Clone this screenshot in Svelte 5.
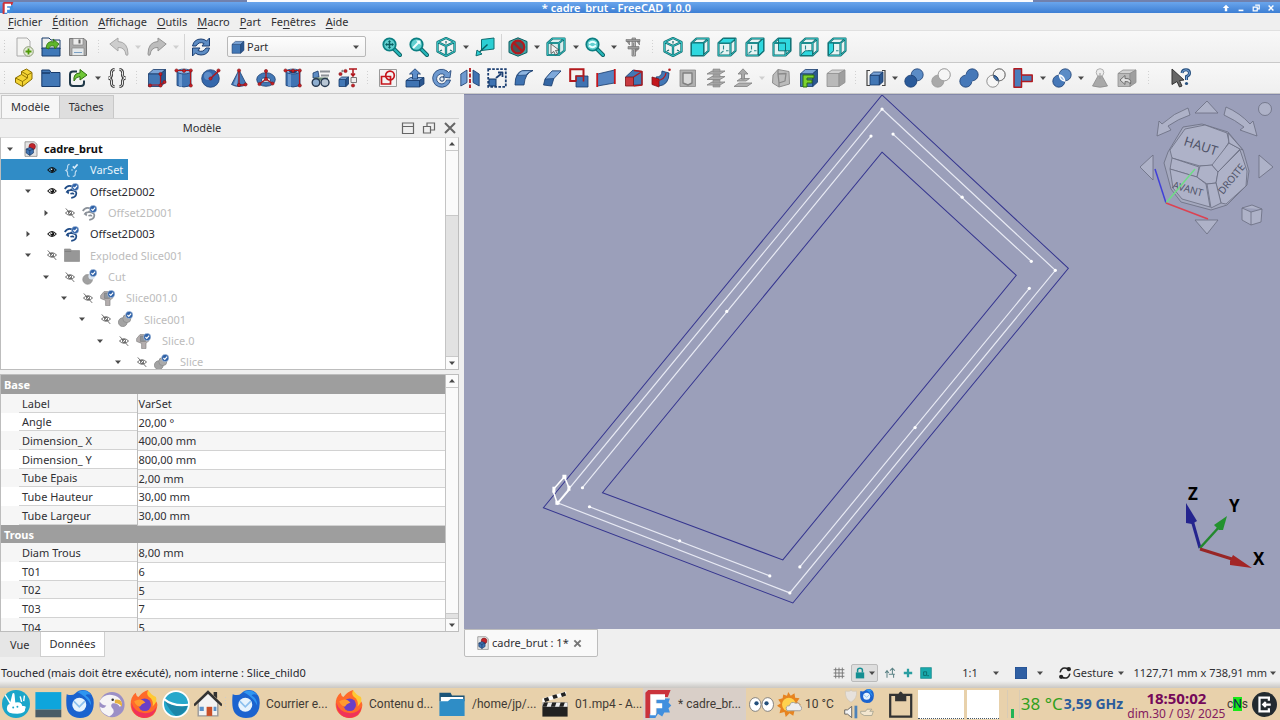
<script>
  const two = (d, fill = 'none', w = 1) =>
    `<path d="${d}" fill="${fill}" stroke="#0f6c6f" stroke-width="${w + 1.3}" stroke-linejoin="round"/><path d="${d}" fill="none" stroke="#35bfc0" stroke-width="${w}" stroke-linejoin="round"/>`;
  const st = (d, fill, stroke, w = 1) =>
    `<path d="${d}" fill="${fill}" stroke="${stroke}" stroke-width="${w}" stroke-linejoin="round"/>`;
  const c = (x, y, r, fill, stroke = 'none', w = 1) =>
    `<circle cx="${x}" cy="${y}" r="${r}" fill="${fill}" stroke="${stroke}" stroke-width="${w}"/>`;
  const dots = (list) => list.map(([x, y]) => c(x, y, 1.6, '#c81e24', '#7c1216', 0.6)).join('');

  const isoWire = two('M10 1 18.500 5V14.500L10 19 1.500 14.500V5ZM1.500 5 10 9 18.500 5M10 9V19') + st('M10 4V6.500M6 13 4 14M14 13 16 14', 'none', '#0f6c6f', 1.2);
  const view = (face, inner = true) =>
    two('M1.5 6H13.5V18.5H1.5ZM1.5 6 6.5 1.500H18.5V13.8L13.5 18.5M13.5 6 18.500 1.5', '#e6f3f3', 0.8) +
    (inner ? st('M6.500 8.500V12.500M6.500 13.800 3.500 16.500M9 13.800H11.500', 'none', '#27898c', 1.1) : '') +
    st(face, '#2fd8df', '#0f6c6f', 0.9);
  const lens = (inner) =>
    `<path d="M12 12 18 18" stroke="#0b5f62" stroke-width="4" stroke-linecap="round"/><path d="M12 12 18 18" stroke="#25b5b8" stroke-width="2.400" stroke-linecap="round"/>` +
    c(7.5, 7.5, 6.2, '#62d0d0', '#0b7f82', 1.8) + inner;
  const blueBox = (x, y, s) =>
    st(`M${x} ${y + s * 0.25}H${x + s * 0.72}V${y + s}H${x}Z`, '#4277b5', '#173a6b', 0.8) +
    st(`M${x} ${y + s * 0.25} ${x + s * 0.28} ${y}H${x + s}L${x + s * 0.72} ${y + s * 0.25}Z`, '#7aa3d6', '#173a6b', 0.8) +
    st(`M${x + s * 0.72} ${y + s * 0.25} ${x + s} ${y}V${y + s * 0.75}L${x + s * 0.72} ${y + s}Z`, '#2b5790', '#173a6b', 0.8);
  const grayBox =
    st('M1 5.5H13V18.500H1Z', '#b9b9b9', '#8f8f8f', 0.8) + st('M1 5.5 6 2H19L13 5.5Z', '#d2d2d2', '#8f8f8f', 0.8) + st('M13 5.5 19 2V14.500L13 18.500Z', '#9f9f9f', '#8f8f8f', 0.8);
  const balls = (a, b, sa = '#1c3f72', sb = '#1c3f72') => c(13.2, 6.8, 6, b, sb, 0.8) + c(6.8, 13.2, 6, a, sa, 0.8);
  const cyl = st('M3 3.500V17.500Q10 20.500 17 17.500V3.500Z', '#3f74b4', '#1c3f72', 0.8) + st('M5 5V18Q7 19 8 19V6Z', '#6c9ad0', 'none', 0) + `<ellipse cx="10" cy="3.500" rx="7" ry="2.400" fill="#8db0dc" stroke="#1c3f72" stroke-width=".8"/>`;
  const cylMarks = '<path d="M2.500 2.500H16.500V17.500" fill="none" stroke="#b0161c" stroke-width="1.200"/>' + dots([[2.5, 2.5], [10, 2.8], [16.8, 2.5], [16.8, 17.5]]);
  const check = c(14, 5, 4.6, '#2f62a8', '#fff', 0.5) + '<path d="M11.8 5 13.5 6.8 16.4 3.4" fill="none" stroke="#fff" stroke-width="1.5"/>';
  const swirl = (s) => `<path d="M1 7.500Q4 2.500 9 4Q12 5 12 8Q9 7 8 9.500M3 12Q5 8 10 9Q17 10 15 15Q14 18 9 18.500M5 9.500Q4 12 6 13M8 13.500Q12 12 12 14.500" fill="none" stroke="${s}" stroke-width="2.200"/>`;

  const icons = {
    new: st('M3 1H13L16 4V19H3Z', '#f4f4f2', '#aaa') + c(14.5, 14.5, 4.8, '#e4ebd8', '#8b9a75') + '<path d="M14.5 11.5V17.5M11.5 14.5H17.5" stroke="#4e9a06" stroke-width="1.8"/>',
    open: st('M1 1H8L10 3H19V12H1Z', '#eee', '#173a6b') + st('M1 11H19V19H1Z', '#3f78b8', '#173a6b') + st('M5 11Q6 3 13 5L12 2 18 7 14 12 13 9Q8 8 8 12Z', '#5fb62c', '#2f6f10', 0.8),
    save: st('M1.5 1.5H16L18.5 4V18.5H1.5Z', '#a9a9a9', '#777') + st('M5 1.5H15V8H5Z', '#ececec', '#888', 0.7) + '<path d="M11.5 2.5V6.5" stroke="#666" stroke-width="2"/>' + st('M4 11H16V18.5H4Z', '#e4e8ea', '#888', 0.7) + '<path d="M6 15.5H14" stroke="#7aa0c4"/>',
    undo: st('M.8 7 9 1V4.5Q19 5 19 17Q19 19 17 18Q16 10 9 10.5V14Z', '#cdcdcd', '#a8a8a8'),
    redo: st('M19.200 7 11 1V4.5Q1 5 1 17Q1 19 3 18Q4 10 11 10.5V14Z', '#bdbdbd', '#959595'),
    refresh: st('M1.5 9Q3 2 10 2Q13.500 2 15.500 4L18.500 1V9H11L13 6.500Q8 4 5 9Z', '#5d8cc4', '#1c3f72') + st('M18.500 11Q17 18 10 18Q6.500 18 4.500 16L1.500 19V11H9L7 13.500Q12 16 15 11Z', '#5d8cc4', '#1c3f72'),
    box: blueBox(1.5, 1.5, 17) + '<path d="M3 17H13.500L17.500 14M13.500 17V6" stroke="#b0161c" stroke-width="1.200" fill="none"/>' + dots([[3, 17.5], [13.5, 17.5], [17.5, 14], [13.5, 6]]),
    part: blueBox(1.5, 2, 17),
    fit: lens('<path d="M7.500 4V11M4 7.500H11" stroke="#0b5f62" stroke-width="1.400"/><path d="M6 5 7.500 3 9 5ZM6 10 7.500 12 9 10ZM5 6 3 7.500 5 9ZM10 6 12 7.500 10 9Z" fill="#0b5f62"/>'),
    fitsel: lens('<path d="M4 11 10 5" stroke="#f2ffff" stroke-width="2"/><path d="M7 3.500H11.500V8Z" fill="#f2ffff"/>'),
    lensbox: lens('<path d="M4 6.500Q7.500 3 11 6.500M4 8.500Q7.500 12 11 8.500" fill="none" stroke="#e6ffff" stroke-width="1.800"/>'),
    iso: isoWire,
    plane: st('M6.500 2.500 19 1V12L6.500 13.500Z', '#2bcfd4', '#0f6c6f') + '<path d="M12.500 7.500 4 15.500" stroke="#0b5f62" stroke-width="1.500"/>' + st('M1 18.800 2 13 7 17Z', '#2bcfd4', '#0f6c6f'),
    forbid: st('M10 .8 19 4.500V15.500L10 19.200 1 15.500V4.500Z', '#42a7a8', '#0b5f62') + c(10, 10, 6.3, '#4a565a', '#b3191d', 2.2) + '<path d="M5.600 5.600 14.400 14.400" stroke="#b3191d" stroke-width="2.200"/>',
    selbox: two('M1.500 6H13V18H1.500ZM1.500 6 6.500 1.500H18.500V13.500L13 18M13 6 18.500 1.500', '#d8eeee', 0.9) + st('M5 7 13 13 9.500 13.500 11.500 17 9.500 18 7.800 14.500 5 16.500Z', '#f2f2f2', '#333', 0.7),
    caliper: st('M9 1H12.500V19H9Z', '#b5b5b5', '#777', 0.8) + st('M3 2.500H17V4.500H3ZM4 4.500H6.500V8ZM5 9.500H16V12H5ZM14 4.500H16.500V8ZM12.500 12H15.500L12.500 15Z', '#9b9b9b', '#6f6f6f', 0.6) + st('M10.500 6V9M10.500 13V18', 'none', '#777', 0.7),
    vfront: view('M1.500 6H13.500V18.500H1.500Z', false),
    vtop: view('M1.500 6 6.500 1.500H18.500L13.500 6Z'),
    vright: view('M13.500 6 18.500 1.500V13.800L13.500 18.500Z'),
    vback: view('M6.500 6H13.500V13.800H6.500ZM6.500 1.500H18.500V13.800H13.500V6H6.500Z', false),
    vbottom: view('M1.500 18.500 6.500 13.800H13.500V18.500Z'),
    vleft: view('M1.500 6 6.500 6V13.800L1.500 18.500Z'),
    steps: st('M1.500 10 7.500 6.500V3.500L12.500 1 18 4.500V11L8.500 18.500 1.500 14.500Z', '#f3d434', '#8a6d00') + st('M1.500 10 8.500 13.500V18.500M8.500 13.500 13.500 10V7L18 4.500M7.500 3.500 13.500 7M7.500 6.500 13.500 10', 'none', '#8a6d00', 0.9),
    folder: st('M.8 2H8.500L10 4.500H19V18.500H.8Z', '#4277b5', '#173a6b') + '<path d="M1 5H9" stroke="#173a6b" stroke-width="1.500"/>',
    link: st('M9 3.500H5Q2 3.500 2 6.500V15Q2 18 5 18H13Q16 18 16 15V12.500', 'none', '#203848', 2) + st('M6 13Q5 5 12 5V1.500L19 7 12 12V8.500Q8 8.500 6 13Z', '#6fc736', '#2f6f10'),
    braces: '<path d="M7.500 1.500Q4 1.500 4.500 6Q5 9.500 1.500 10Q5 10.500 4.500 14Q4 18.500 7.500 18.500M12.500 1.500Q16 1.500 15.500 6Q15 9.500 18.500 10Q15 10.500 15.500 14Q16 18.500 12.500 18.500" fill="none" stroke="#333" stroke-width="2.800"/><path d="M7.500 1.500Q4 1.500 4.500 6Q5 9.500 1.500 10Q5 10.500 4.500 14Q4 18.500 7.500 18.500M12.500 1.500Q16 1.500 15.500 6Q15 9.500 18.500 10Q15 10.500 15.500 14Q16 18.500 12.500 18.500" fill="none" stroke="#eee" stroke-width="1"/>',
    cylinder: cyl + cylMarks,
    sphere: c(9.5, 10.5, 8.8, '#3568ac', '#1c3f72', 0.8) + c(7, 8, 4, '#5d8cc8') + '<path d="M9.500 10.500 17.500 3" stroke="#b0161c" stroke-width="1.500"/>' + dots([[9.5, 10.5], [17.5, 2.5]]),
    cone: st('M10 2 17.500 16.500Q10 20.500 2.500 16.500Z', '#4277b5', '#1c3f72', 0.8) + st('M9.500 4 4.500 16.500 8 17.500Z', '#7aa3d6', 'none', 0) + '<path d="M10 2V17H16" fill="none" stroke="#b0161c" stroke-width="1.300"/>' + dots([[10, 2.5], [10, 17], [16.5, 16.5]]),
    torus: '<ellipse cx="10" cy="11.500" rx="9.300" ry="6.800" fill="#4277b5" stroke="#1c3f72" stroke-width=".8"/><ellipse cx="10" cy="12" rx="4.500" ry="2.300" fill="#e9edf2" stroke="#1c3f72" stroke-width=".8"/><path d="M10 3V11L3.500 16M10 11 16.500 15.500" fill="none" stroke="#b0161c" stroke-width="1.300"/>' + dots([[10, 3], [10, 11], [3.5, 16], [16.5, 15.5]]),
    tube: cyl + '<ellipse cx="10" cy="3.800" rx="4" ry="1.200" fill="#1c3f72"/>' + cylMarks,
    prims: st('M2 5 7 3 8 9 2 10Z', '#5d8cc4', '#173a6b', 0.8) + '<path d="M9 3.500H19M10 7.500H18" stroke="#8b9096" stroke-width="1.800"/><path d="M3 11H17" stroke="#6b8a75" stroke-width="3"/>' + c(5, 14.5, 3.8, '#8eaed0', '#26384f', 1.4) + c(14, 14.5, 4, '#b8c6d4', '#26384f', 1.4),
    builder: blueBox(1, 9, 9.5) + st('M13 9.500H18.500V14.500H13Z', '#eee', '#777', 1) + '<path d="M11 1H19M15 1V8M13 5.500 15 8 17 5.500" stroke="#b0161c" stroke-width="1.500" fill="none"/>' + dots([[2.5, 6], [7.5, 3], [15, 17.5]]) + c(4.5, 3, 1.2, '#888'),
    sketch: st('M1.500 1.500H18.500V18.500H1.500Z', '#f4f4f4', '#9a9a9a') + '<path d="M3.500 8.500H12.500V16H3.500Z" fill="none" stroke="#c5161c" stroke-width="1.700"/><circle cx="12" cy="7.500" r="4.300" fill="none" stroke="#c5161c" stroke-width="1.700"/>',
    extrude: st('M1 12.500 5.500 9.500H19L14.500 12.500Z', '#7aa3d6', '#173a6b', 0.8) + st('M1 12.500H14.500V19H1Z', '#3f73b2', '#173a6b', 0.8) + st('M14.500 12.500 19 9.500V16L14.500 19Z', '#2b5790', '#173a6b', 0.8) + st('M7.500 11V6H4.500L10 .8 15.500 6H12.500V11Z', '#5d8ecb', '#173a6b', 0.8),
    revolve: st('M15 3A9 9 0 1 0 18.500 12L14.500 12A5 5 0 1 1 12.500 6.800L11 9 18 10 19 2.500 16.500 4.500Z', '#6f9ad0', '#1c3f72', 0.8) + c(10, 11, 2.2, '#e8f0f8', '#1c3f72'),
    mirror: st('M.8 6 7 2V14.500L.8 18Z', '#6f9ad0', '#173a6b', 0.8) + st('M13 2 19.200 6V18L13 14.500Z', '#3f73b2', '#173a6b', 0.8) + '<path d="M10 0V20" stroke="#b3191d" stroke-width="1.800" stroke-dasharray="4 1.500"/>',
    scale: '<path d="M1.200 1.200H18.800V18.800H1.200Z" fill="none" stroke="#1c3f72" stroke-width="1.800" stroke-dasharray="2.600 1.400"/>' + st('M2 11H9V18H2Z', '#3f73b2', '#173a6b') + st('M9 10 14 6M11 4.500H15.500V9', 'none', '#1c3f72', 1.8),
    fillet: st('M1 17Q1 3 10 2.500H19Q11 5 10 17Z', '#3f73b2', '#173a6b', 0.8) + st('M8 2.800 19 2.500Q14 4 12 7L3.500 7.500Q5 4 8 2.800Z', '#8db4e0', '#173a6b', 0.6),
    chamfer: st('M1.500 17 3 11 10 3H19L12 10 9.500 18Z', '#3466a4', '#173a6b', 0.8) + st('M3 11 10 3H19L12 10.500Z', '#7ea8da', '#173a6b', 0.6),
    face: '<path d="M1.200 1.200H14.500V13H1.200Z" fill="#f3f3f3" stroke="#b3191d" stroke-width="2"/>' + st('M7 8H19V19H7Z', '#3f73b2', '#173a6b', 0.8) + '<path d="M7 13.500V8H14.500V13.500" fill="none" stroke="#b3191d" stroke-width="1.600"/>',
    ruled: st('M1.500 6 18.500 2V15L1.500 18Z', '#5585c2', '#173a6b', 0.8) + '<path d="M1.200 5V19M18.800 1V16" stroke="#c5161c" stroke-width="1.800"/>',
    loft: st('M1.500 9 9 2 18 3.500V17H8Z', '#4277b5', '#173a6b', 0.8) + st('M1.500 9H9.500V18H1.500Z', '#c83a40', '#7c1216', 0.8) + st('M9.500 9 18 3.500V17L9.500 18M10 2.500 18 3.500', 'none', '#b3191d', 1.4),
    sweep: st('M5 9Q11 9 11 3L18 5Q18 17 8 18Z', '#4277b5', '#173a6b', 0.8) + st('M1 9 8 11 8 19 1 16.500Z', '#c5161c', '#7c1216', 0.8) + '<path d="M5 13Q14 12 15 5" fill="none" stroke="#b3191d" stroke-width="1.300"/>' + c(18.5, 1.8, 1.3, '#b3191d'),
    section: st('M2 2H17.500V18.500H2Z', '#b0b0b0', '#888', 0.8) + st('M5 5H14V15L10 17 5 15Z', '#dadada', '#808080', 1.4),
    cross: st('M1 6 6 3H19L14 6ZM1 11.500 6 8.500H19L14 11.500ZM1 17 6 14H19L14 17Z', '#b0b0b0', '#808080', 0.8) + st('M7 1H14V4H7ZM7 6.500H14V9H7ZM7 12H14V15H7ZM7 17H14V19H7Z', '#a2a2a2', '#888', 0.6),
    offset: st('M1 18.500 6 15H19L14 18.500ZM4 13 7.500 10.500H16.500L13 13Z', '#b0b0b0', '#808080', 0.8) + st('M8.500 11V6H5L10 .8 15 6H11.500V11Z', '#a9a9a9', '#808080', 0.8),
    thick: st('M2 7 7 1.500 18 3.500 18.500 16 8 19 1.500 15Z', '#bcbcbc', '#8f8f8f') + st('M7 6 15 5.500 14 13 8 15ZM7 1.500V6M8 15V19', 'none', '#8a8a8a', 1.3),
    proj: blueBox(1.5, 1.5, 17) + st('M4 19V7H15V10H8V12H13V15H8V19Z', '#7cd32f', '#2f6f10'),
    graycube: grayBox,
    compound: blueBox(4, 4, 13) + '<path d="M4 2.500H1V17.500H4M16 2.500H19V17.500H16" fill="none" stroke="#444" stroke-width="1.200"/>',
    boolean: balls('#2a5a9a', '#5b8cc6'),
    cut: balls('#a9a9a9', '#f6f6f6', '#999', '#999') + c(13.2, 6.8, 6, '#f6f6f6', '#999', 0.8),
    union: balls('#4678b8', '#4678b8') + c(10, 10, 4.5, '#4678b8'),
    common: balls('#f6f6f6', 'none', '#777', '#777') + st('M7.300 7Q12 8 12.800 13Q8 12.500 7.300 7Z', '#4277b5', '#1c3f72') + c(13.2, 6.8, 6, 'none', '#777', 0.8),
    join: st('M1 .8H8.500V7H19.200V13.500H8.500V19.200H1Z', '#4a7dbb', '#b3191d', 1.5) + st('M8.500 7V13.500', 'none', '#b3191d', 1),
    split: balls('#4678b8', '#5b8cc6') + st('M7.300 7Q12 8 12.800 13Q8 12.500 7.300 7Z', '#9dbde4', '#fff', 1.3),
    checkgeo: st('M8 8H12L17.500 18Q10 20.500 2.500 18Z', '#a9a9a9', '#8c8c8c', 0.8) + c(10, 4.5, 3.8, '#ececec', '#b0b0b0') + st('M10 5V11', 'none', '#999'),
    defeature: grayBox + st('M3 12 8 7.500V10.500Q15 10 13.500 16Q12 13 8 13.500V16.500Z', '#e0e0e0', '#6f6f6f'),
    whats: st('M1 1 13 12 8.500 12.500 11 18 8.500 19 6 13.500 1 16.500Z', '#666', '#333') + '<path d="M11 5Q11.500 1.800 15 1.800T18.500 5Q18.500 7.500 15.500 8.500V12" fill="none" stroke="#26507f" stroke-width="3"/><path d="M11 5Q11.500 1.800 15 1.800T18.500 5Q18.500 7.500 15.500 8.500V12" fill="none" stroke="#7aa3d6" stroke-width="1"/>' + c(15.5, 15.5, 1.6, '#26507f'),
    // tree
    eye: '<path d="M4 10Q10 3 16 10Q10 17 4 10Z" fill="none" stroke="currentColor" stroke-width="1.500"/><circle cx="10.500" cy="10" r="2.800" fill="currentColor"/><circle cx="9.500" cy="9" r="1" fill="#fff"/>',
    eyeoff: '<path d="M3.500 10Q10 3.500 16.500 10Q10 16.500 3.500 10ZM4 3.500 16 17" fill="none" stroke="#555" stroke-width="1.200"/><circle cx="10" cy="10" r="2.400" fill="none" stroke="#555" stroke-width="1.100"/>',
    doc: st('M2.500 1H14L17.500 4V19.200H2.500Z', '#e4e4e4', '#888') + c(11.5, 7, 4, '#c2242a', '#7c1216', 0.8) + st('M4 10 8.500 8 13 10V15L8.500 18 4 15Z', '#3f73b2', '#122f5a', 0.8) + '<path d="M4 10 8.500 12 13 10M8.500 12V18" fill="none" stroke="#122f5a" stroke-width=".8"/>',
    varset: '<path d="M7 3Q4 3 4.500 7Q4.500 9.500 2.500 10.500Q4.500 11.500 4.500 14Q4 18 7 18M11 18Q14.500 18 14 14Q14 11.500 16 10.500" fill="none" stroke="#b9d8ee" stroke-width="1.500"/><path d="M11 5.500 13 7.500 17 3" fill="none" stroke="#d9ecfa" stroke-width="2"/>' + c(10, 10, 0.9, '#d9ecfa'),
    off2d: swirl('#1f4b86') + check,
    off2dg: swirl('#8b9199') + check,
    gfolder: st('M.5 2.500H8L9.500 4.500H19.500V18H.5Z', '#979797', '#888', 0.8) + '<path d="M1 5.500H9" stroke="#777"/>',
    gcut: c(7, 13, 6, '#a0a0a0', '#909090') + c(12, 9, 4, '#d9e4f0') + check,
    gslice: st('M.8 7 5 2H16V10L12.500 12.500V19.500H7V13L.8 10.500Z', '#b4aeae', '#7f7f7f', 0.8) + st('M5.500 4H12V10.500H5.500Z', '#8f9499', '#777', 0.7) + check,
    gslice2: c(6, 14, 5.5, '#a3a3a3', '#8d8d8d') + c(11, 9.5, 5, '#aaa', '#8d8d8d') + check,
    // status bar
    grid: '<path d="M4.500 1V19M10 1V19M15.500 1V19M1 4.500H19M1 10H19M1 15.500H19" stroke="#777" stroke-width="1.600"/>',
    lock: '<path d="M3 9H17V19H3Z" fill="#158f92"/><path d="M6 9V5Q6 2 10 2T14 5V9" fill="none" stroke="#158f92" stroke-width="2.500"/>',
    relative: '<path d="M5 18V8M2 10 5 6 8 10M8 12H18M14 12V3M10 6 14 2 18 6M16 12V18" fill="none" stroke="#5b8285" stroke-width="1.700"/>',
    plus: '<path d="M10 3V17M3 10H17" stroke="#2a9ea1" stroke-width="3.800"/>',
    teal: st('M1 1H19V19H1Z', '#19a9ac', '#0d7f82') + st('M6 8H11V14H6ZM12 14.500H15', 'none', '#0b5f62', 1.3),
    bluesq: '<path d="M0 0H20V20H0Z" fill="#2f5fa3" stroke="#1d457f"/>',
    gesture: '<path d="M15 4Q5 0 3 9M5 16Q15 20 17 11" fill="none" stroke="#222" stroke-width="2.200"/>' + c(15.5, 4.5, 3, '#222') + c(4.5, 15.5, 3, '#222'),
    // task bar
    hare: c(10, 10, 10, '#1aa6ca') + '<path d="M3 5.500Q1.500 4 2.500 3L6 8.500 7.500 2.500Q9 1.500 9 3.500L9.500 9Q14 8 14.500 11.500Q18 11 16.500 13.500Q17 16.500 11 17Q3.500 17 3.500 13.500Q3.500 10.500 5.500 10Z" fill="#fff"/><path d="M14 8.500 13 4.500M15.500 8 16 4M9 13 13 12" stroke="#fff" fill="none"/>' + c(8, 12.5, 0.7, '#1aa6ca') + c(11, 12, 0.7, '#1aa6ca'),
    desk: '<path d="M1 1.500H19.500V14H1Z" fill="#0ea5dc"/><path d="M1 14H19.500V19.500H1Z" fill="#4a5c66"/>',
    bird: '<path d="M.5 3Q4.500 4.500 6.500 2.500Q10-1 15 .5Q20 3 19.800 9.500Q19.500 20 10 20Q1 19.500 .3 11Q0 6 .5 3Z" fill="#1b63cf"/><path d="M8 1.500Q14-1.500 18 3.500Q15 2.500 14 4Q18 6 18 11Q14 4 8 1.500Z" fill="#2f95f0"/>' + c(9.5, 10.5, 5, '#e6f3fd') + '<path d="M5.500 8 9.500 12 13.500 8" fill="none" stroke="#8cc0ee" stroke-width="1.200"/>',
    eagle: c(10, 10.5, 9, '#9b8fc6') + '<path d="M1 8Q4 2.500 10 3.500Q15 4 16.500 8Q18 11 15.500 12Q14 9 10.500 9.500Q8 11 11 14Q12 17 8 19Q1 16 1.500 12Q4 14 6 11Q3 11 1 8Z" fill="#f6f4f6"/><path d="M12 7Q18 6 17 12Q15 9 12 9.500Z" fill="#e7b23e"/>' + c(10.5, 7, 0.9, '#333'),
    fox: '<path d="M10 20A9.500 9.500 0 0 1 .5 10Q.5 5 4 2Q4.500 4.500 6 5Q9 1 13 0Q12 3 15 5Q20 8 19.500 11Q18.500 20 10 20Z" fill="#ff6a2a"/><path d="M13 0Q11 4 15 6Q17 9 16 12Q20 8 18.500 5Q15 3.500 13 0Z" fill="#ffc933"/><path d="M1 9Q1 19 10 20Q18 19.500 19 12Q16 17 10 16.500Q3 16 1 9Z" fill="#f0335a"/>' + c(10.5, 10.5, 4.5, '#6a3fc5') + '<path d="M3 8Q8 5 11 9Q8 10 7 12Q4 11 3 8Z" fill="#ff9a2e"/>',
    globe: c(10, 10, 9.2, '#27a8cb', '#fff', 1.2) + '<path d="M1.500 7Q9 12 18.500 11Q16 18 10 18.500Q6 16 1.500 7Z" fill="#1c86a8"/><path d="M1.500 6.500Q8 12 18.800 10.500" fill="none" stroke="#fff" stroke-width="1.500"/>',
    home: '<path d="M3 9 10 2 17 9V18.500H3Z" fill="#f3f3f3" stroke="#999"/><path d="M0 11 10 1.500 20 11" fill="none" stroke="#333" stroke-width="1.800"/><path d="M14 1.500H16.500V6L14 4Z" fill="#333"/><path d="M9 12H13V18.500H9Z" fill="#c94f28"/><path d="M4 12H7V15H4ZM14 12H16V15H14Z" fill="#5a91c8"/>',
    tfolder: '<path d="M1 2H9L10 4H19V8H1Z" fill="#1b5478"/><path d="M2 5H18V9H2Z" fill="#fff"/><path d="M1 8H7L9 6.500H19V18.500H1Z" fill="#2f8dc6"/>',
    clap: '<path d="M1 9H19V19H1Z" fill="#222"/><path d="M1 6 18 1V4L1 9Z" fill="#fff"/><path d="M2 6 5 5 6 7.500 3 8.500ZM8 4 11 3 12 5.500 9 6.500ZM14 2.500 17 1.500 18 4 15 5Z" fill="#222"/><path d="M1 9H19V12H1Z" fill="#eee"/><path d="M2 9H5L4 12H1ZM8 9H11L10 12H7ZM14 9H17L16 12H13Z" fill="#222"/>',
    fcad: '<path d="M3 0H19L17 5H8V20H1V2Z" fill="#cb333b"/><path d="M9 6H18.500L17.500 9 19.500 11 17.500 13 18.500 16 14.500 16 13 19 10 17 8 20H4V17H9Z" fill="#418fde"/><path d="M4.500 3H15V7H8.500V9.500H13V13H8.500V18H4.500Z" fill="#fff"/>',
    eyes: '<ellipse cx="5" cy="10" rx="4.600" ry="5.500" fill="#fff" stroke="#777" stroke-width=".7"/><ellipse cx="15" cy="10" rx="4.600" ry="5.500" fill="#fff" stroke="#777" stroke-width=".7"/>' + c(6, 9, 1.7, '#24507c') + c(14, 9, 1.7, '#24507c'),
    sun: '<path d="M9 0 11 3 14 1 14.500 4.500 18 5 16 8 19 10 16 12 17 15 14 15 13 19 10 17 7 20 6 16 2 17 3 13 0 11 3 9 1 6 4.500 5 5 2 8 3Z" fill="#e78420"/>' + c(9.5, 10, 5.5, '#ffd24d') + '<path d="M8 15Q6 11 10 11Q11 7 15 9Q18 8 18.500 11Q21 13 18.500 15Z" fill="#eee" stroke="#999" stroke-width=".7"/>',
    clip: '<path d="M3 3.500H18V19H3Z" fill="none" stroke="#333" stroke-width="1.600"/><path d="M6.500 3.500H8.500Q10.500-1.500 12.500 3.500H14.500V8H6.500Z" fill="#333"/>',
    exit: c(10, 10, 10, '#222b30') + '<path d="M13.500 7V4.500H6V15.500H13.500V13M9 10H15M11 8 9 10 11 12" fill="none" stroke="#fff" stroke-width="1.800"/>',
    speaker: '<path d="M1 7H5L11 2V18L5 13H1Z" fill="#f4f4f4" stroke="#555" stroke-width="1.200"/><path d="M15 1H19V19H15Z" fill="#4d82b8"/>',
    shield: '<path d="M2 3Q10 4 10 1Q10 4 18 3Q19 14 10 19Q1 14 2 3Z" fill="#e6e1dc" stroke="#d0c5b5"/>',
    hand: '<path d="M1 9H8L10 6H17L14 9H19L17 15H6L1 12Z" fill="#f3e6cf" stroke="#998" stroke-width="1"/>'
  };

  // "v" menu arrow, "w" disabled arrow, "|" thin divider, ":" gap between toolbars, "#" workbench picker
  const rowOne = 'new open save : undo w redo w | refresh # fit fitsel iso v plane | forbid v selbox v lensbox v caliper : iso vfront vtop vright vback vbottom vleft';
  const rowTwo = 'steps folder link v braces : box cylinder sphere cone torus tube prims builder : sketch extrude revolve mirror scale fillet chamfer face ruled loft sweep section cross offset w thick proj graycube : compound v boolean cut union common join v split v checkgeo defeature = whats';
  const parse = (row) => {
    let n = 0;
    return row.split(' ').map((k) => {
      if (':#='.includes(k)) n = 0;
      if ('vw|:#='.includes(k)) return { k };
      n += 1;
      return { k, wide: n % 3 === 0 };
    });
  };
  const bars = [parse(rowOne), parse(rowTwo)];

  const menus = [['', 'F', 'ichier'], ['', 'É', 'dition'], ['', 'A', 'ffichage'], ['', 'O', 'utils'], ['', 'M', 'acro'], ['', 'P', 'art'], ['Fe', 'n', 'êtres'], ['', 'A', 'ide']];

  const tree = [
    { l: 0, a: 'd', i: 'doc', t: 'cadre_brut', root: true },
    { l: 1, a: '', e: 1, i: 'varset', t: 'VarSet', sel: true },
    { l: 1, a: 'd', e: 1, i: 'off2d', t: 'Offset2D002' },
    { l: 2, a: 'r', e: 0, i: 'off2dg', t: 'Offset2D001' },
    { l: 1, a: 'r', e: 1, i: 'off2d', t: 'Offset2D003' },
    { l: 1, a: 'd', e: 0, i: 'gfolder', t: 'Exploded Slice001' },
    { l: 2, a: 'd', e: 0, i: 'gcut', t: 'Cut' },
    { l: 3, a: 'd', e: 0, i: 'gslice', t: 'Slice001.0' },
    { l: 4, a: 'd', e: 0, i: 'gslice2', t: 'Slice001' },
    { l: 5, a: 'd', e: 0, i: 'gslice', t: 'Slice.0' },
    { l: 6, a: 'd', e: 0, i: 'gslice2', t: 'Slice' }
  ];

  const props = [
    ['Base'], ['Label', 'VarSet'], ['Angle', '20,00 °'], ['Dimension_ X', '400,00 mm'], ['Dimension_ Y', '800,00 mm'],
    ['Tube Epais', '2,00 mm'], ['Tube Hauteur', '30,00 mm'], ['Tube Largeur', '30,00 mm'],
    ['Trous'], ['Diam Trous', '8,00 mm'], ['T01', '6'], ['T02', '5'], ['T03', '7'], ['T04', '5']
  ];

  const points = [[882, 109], [1055, 270], [790, 592], [558, 502], [871, 136], [727, 311], [583, 487], [893, 134], [962, 197], [1031, 261], [1029, 288], [915, 427], [800, 566], [590, 506], [680, 540], [770, 575]];

  const launchers = ['hare', 'desk', 'bird', 'eagle', 'fox', 'globe', 'home'];
  const windows = [
    { i: 'bird', t: 'Courrier e...' }, { i: 'fox', t: 'Contenu d...' }, { i: 'tfolder', t: '/home/jp/...' },
    { i: 'clap', t: '01.mp4 - A...' }, { i: 'fcad', t: '* cadre_br...', on: true }
  ];
</script>

{#snippet icon(name, cls = 'i20')}
  <svg class={cls} viewBox="0 0 20 20" aria-hidden="true">{@html icons[name]}</svg>
{/snippet}

{#snippet tri(dir = 'd')}
  <svg class="tri" viewBox="0 0 8 8" aria-hidden="true">
    <path d={dir === 'd' ? 'M1 2.500H7L4 6Z' : dir === 'u' ? 'M1 5.500H7L4 2Z' : 'M2.500 1V7L6 4Z'} fill="currentColor" />
  </svg>
{/snippet}

{#snippet scroller(cls)}
  <div class="scroll {cls}">
    <button aria-label="Défiler vers le haut">{@render tri('u')}</button>
    <div class="track"><div class="thumb"></div></div>
    <button aria-label="Défiler vers le bas">{@render tri('d')}</button>
  </div>
{/snippet}

<div class="app">
  <div class="behind"><i></i><b></b><i></i></div>
  <header class="title">
    {@render icon('fcad', 'i11')}
    <h1>* cadre_brut - FreeCAD 1.0.0</h1>
    <div class="wm">
      <button aria-label="Enrouler"><svg viewBox="0 0 10 10"><path d="M5 1 9 5H6.500V9H3.500V5H1Z" fill="#fff" /></svg></button>
      <button aria-label="Réduire"><svg viewBox="0 0 10 10"><path d="M2 8H8" stroke="#fff" stroke-width="2" /></svg></button>
      <button aria-label="Restaurer"><svg viewBox="0 0 10 10"><path d="M4 1.500H9V6H7M1.500 4H6.500V8.500H1.500Z" fill="none" stroke="#fff" stroke-width="1.500" /></svg></button>
      <button aria-label="Fermer"><svg viewBox="0 0 10 10"><path d="M2 2 8 8M8 2 2 8" stroke="#fff" stroke-width="1.800" /></svg></button>
    </div>
  </header>

  <nav class="menu">
    {#each menus as [a, u, b]}<button>{a}<u>{u}</u>{b}</button>{/each}
  </nav>

  {#each bars as bar, r}
    <div class="bar" class:second={r === 1} role="toolbar" aria-label={r ? 'Part' : 'Fichier et vues'}>
      <span class="grip"></span>
      {#each bar as it}
        {#if it.k === 'v' || it.k === 'w'}<button class="drop" disabled={it.k === 'w'} aria-label="Plus d’options">{@render tri()}</button>
        {:else if it.k === '|'}<span class="sep"></span>
        {:else if it.k === ':'}<span class="gap"></span>
        {:else if it.k === '='}<span class="gap big"></span>
        {:else if it.k === '#'}
          <label class="bench" aria-label="Atelier">
            {@render icon('part', 'i14')}
            <select aria-label="Atelier"><option>Part</option></select>
            {@render tri()}
          </label>
        {:else}<button class="tool" class:wide={it.wide} aria-label={it.k}>{@render icon(it.k)}</button>{/if}
      {/each}
    </div>
  {/each}

  <main>
    <aside>
      <div class="tabs">
        <button class="on">Modèle</button><button>Tâches</button>
      </div>
      <div class="dock">
        <h2>Modèle</h2>
        <button aria-label="Réduire le panneau"><svg viewBox="0 0 14 14"><path d="M1.500 2H12.500V12.500H1.500ZM1.500 5.500H12.500" fill="none" stroke="#666" stroke-width="1.200" /></svg></button>
        <button aria-label="Détacher le panneau"><svg viewBox="0 0 14 14"><path d="M1.500 5.500H8.500V12H1.500ZM5 5.500V2H12.500V9H8.500" fill="none" stroke="#666" stroke-width="1.200" /></svg></button>
        <button aria-label="Fermer le panneau"><svg viewBox="0 0 14 14"><path d="M2 2 12 12M12 2 2 12" stroke="#666" stroke-width="2" /></svg></button>
      </div>
      <div class="frame treeframe">
        <ul class="tree">
          {#each tree as n}
            <li class:sel={n.sel} class:root={n.root} class:dim={n.e === 0} style:padding-left="{n.l * 18}px">
              <span class="tw">{#if n.a}{@render tri(n.a)}{/if}</span>
              {#if !n.root}{@render icon(n.e ? 'eye' : 'eyeoff', 'eye')}{/if}
              {@render icon(n.i, 'i16')}
              <span class="name">{n.t}</span>
            </li>
          {/each}
        </ul>
        {@render scroller('a')}
      </div>
      <div class="frame propframe">
        <div class="props">
          <table>
            <colgroup><col class="keycol" /><col /></colgroup>
            <tbody>
              {#each props as [k, v]}
                {#if v === undefined}
                  <tr class="group"><th colspan="2">{k}</th></tr>
                {:else}
                  <tr><td class="k"><span>{k}</span></td><td class="v">{v}</td></tr>
                {/if}
              {/each}
            </tbody>
          </table>
        </div>
        {@render scroller('b')}
      </div>
      <div class="tabs low">
        <button>Vue</button><button class="on">Données</button>
      </div>
    </aside>

    <section>
      <div class="view">
        <svg class="scene" viewBox="464 94 816 534" preserveAspectRatio="xMidYMid slice" role="img" aria-label="Cadre">
          <g fill="none" stroke="#35358f" stroke-width="1">
            <path d="M882 95 1068 268 793 602 544 507Z" />
            <path d="M882 152 1016 275 783 559 603 492Z" />
          </g>
          <g fill="none" stroke="#e8eaf4" stroke-width="1.200">
            <path d="M882 109 1055 270 790 592 558 502Z" />
            <path d="M871 136 583 487M893 134 1031 261M1029 288 800 566M590 506 770 575" />
            <path d="M565 476 554.500 488 554 491 558 503 569 490 569.500 487Z" stroke="#fff" stroke-width="1.600" />
          </g>
          {#each points as [x, y]}<circle cx={x} cy={y} r="1.600" fill="#fff" />{/each}
          <path d="M563 474H567V478H563ZM553 486H556V492H553ZM568 485H571V490H568ZM556 500H560V504H556Z" fill="#fff" />
        </svg>

        <svg class="navcube" viewBox="0 0 160 150" role="img" aria-label="Cube de navigation">
          <g fill="#aeb2c8" stroke="#6a6d80" stroke-width=".8" stroke-linejoin="round">
            <path d="M87 9 98 21H75Z" /><path d="M87 142 98 128H75Z" />
            <path d="M20 75 33 63V88Z" /><path d="M153 75 139 63V86Z" />
            <path d="M68 16 70 23Q58 27 48 34L51 38 37 44 39 29 42 32Q54 21 68 16Z" />
            <path d="M106 15 104 23Q115 28 124 35L120 38 137 44 133 29 130 32Q120 21 106 15Z" />
            <circle cx="145" cy="17" r="6.500" />
            <path d="M122 116 132 113 142 117 141 130 131 133 122 128ZM122 116 131 120 142 117M131 120V133" />
            <path d="M63 35 82 32 108 40 123 58 129 79 127 93 107 113 91 118 61 110 51 97 44 71 48 60Z" fill="#a5a9bf" />
            <path d="M65 37 85 33 107 41 109 50 95 73 80 74 52 66 50 58Z" />
            <path d="M52 66 79 75 77 85 50 77Z" />
            <path d="M50 77 77 85 86 92 90 115 62 107 53 96Z" />
            <path d="M80 74 92 73 98 80 96 91 87 92 77 85Z" />
            <path d="M109 51 120 57 98 80 92 73Z" />
            <path d="M108 41 123 58 120 57 109 51Z" />
            <path d="M98 80 120 58 127 79 126 94 106 112 101 111 96 91Z" />
            <path d="M87 92 96 91 101 111 91 116Z" />
          </g>
          <g fill="#505469">
            <text x="63" y="53" transform="rotate(18 63 53)" font-size="13">HAUT</text>
            <text x="52" y="96" transform="rotate(16 52 96)" font-size="10">AVANT</text>
            <text x="103" y="103" transform="rotate(-51 103 103)" font-size="10">DROITE</text>
          </g>
          <g stroke-width="1.500" fill="none">
            <path d="M46 111 35 77" stroke="#4040d8" /><path d="M46 111 75 77" stroke="#6fdd86" /><path d="M46 111 88 127" stroke="#dc4252" />
          </g>
        </svg>

        <svg class="axes" viewBox="0 0 120 120" role="img" aria-label="Axes">
          <path d="M40 78 32 50" stroke="#24248e" stroke-width="3" /><path d="M26 33 37 51 32 54 26 53Z" fill="#24248e" />
          <path d="M40 78 60 56" stroke="#23882e" stroke-width="2.500" /><path d="M67 46 54 55 59 60 63 60Z" fill="#23922e" />
          <path d="M40 79 72 89" stroke="#982626" stroke-width="3" /><path d="M92 98 73 85 70 91 70 95Z" fill="#a32626" />
          <g font-weight="700" font-size="17" fill="#000">
            <text x="28" y="30">Z</text><text x="69" y="42">Y</text><text x="93" y="95">X</text>
          </g>
        </svg>
      </div>
      <div class="doctab">
        {@render icon('doc', 'i14')}<span>cadre_brut : 1*</span>
        <button aria-label="Fermer cadre_brut"><svg viewBox="0 0 10 10"><path d="M1.500 1.500 8.500 8.500M8.500 1.500 1.500 8.500" stroke="#777" stroke-width="2.200" /></svg></button>
      </div>
    </section>
  </main>

  <footer class="status">
    <span class="msg">Touched (mais doit être exécuté), nom interne : Slice_child0</span>
    <button aria-label="Grille">{@render icon('grid', 'i11')}</button>
    <button class="lock" aria-label="Accrochage">{@render icon('lock', 'i11')}{@render tri()}</button>
    <button aria-label="Relatif">{@render icon('relative', 'i11')}</button>
    <button aria-label="Ajouter">{@render icon('plus', 'i11')}</button>
    <button aria-label="Plan">{@render icon('teal', 'i11')}</button>
    <button class="ratio">1:1{@render tri()}</button>
    <button class="paper" aria-label="Plan de travail">{@render icon('bluesq', 'i11')}{@render tri()}</button>
    <button class="nav">{@render icon('gesture', 'i14')}Gesture{@render tri()}</button>
    <button class="size">1127,71 mm x 738,91 mm{@render tri()}</button>
  </footer>

  <div class="task">
    <div class="launch">
      {#each launchers as l}<button aria-label={l}>{@render icon(l, 'i28')}</button>{/each}
    </div>
    <span class="grip small"></span>
    {#each windows as w}
      <button class="win" class:on={w.on}>{@render icon(w.i, 'i28')}<span>{w.t}</span></button>
    {/each}
    <span class="eyes">{@render icon('eyes', 'i25')}</span>
    <span class="meteo">{@render icon('sun', 'i25')}10 °C</span>
    <span class="tray">
      {@render icon('shield', 'i14')}{@render icon('bird', 'i14')}{@render icon('speaker', 'i14')}{@render icon('hand', 'i14')}
    </span>
    <span class="clip">{@render icon('clip', 'i28')}</span>
    <span class="graph"></span><span class="graph slim"></span>
    <span class="cpu"><i></i></span>
    <span class="temp">38 °C</span>
    <span class="freq">3,59 GHz</span>
    <span class="clock"><b>18:50:02</b><span>dim.30 / 03/ 2025</span></span>
    <span class="keys">c<b>N</b>s</span>
    <button class="exit" aria-label="Quitter la session">{@render icon('exit', 'i25')}</button>
  </div>
</div>

<style>
  :global(body) { margin: 0; overflow: hidden; }
  .app { height: 100vh; display: flex; flex-direction: column; background: #efefef; color: #2f2f33; font: 11px/16px "Noto Sans", sans-serif; overflow: hidden; }
  button { border: 0; padding: 0; margin: 0; background: none; font: inherit; color: inherit; display: flex; align-items: center; justify-content: center; flex: none; }
  svg { display: block; flex: none; }
  .i20 { width: 20px; height: 20px; }
  .i16 { width: 16px; height: 16px; }
  .i14 { width: 14px; height: 14px; }
  .i11 { width: 12px; height: 12px; }
  .i28 { width: 28px; height: 28px; }
  .i25 { width: 25px; height: 25px; }
  .tri { width: 8px; height: 8px; color: #4a4a4a; }
  :disabled .tri { color: #cfcfcf; }

  .behind { display: flex; height: 2px; flex: none; }
  .behind i { flex: 247; background: #7181ad; }
  .behind b { flex: 786; background: #fbfbfd; }
  .title { height: 11px; flex: none; display: flex; align-items: center; background: linear-gradient(#6aa5ec, #3d7fd4); color: #fff; padding: 0 2px; }
  h1 { flex: 1; margin: 0; text-align: center; font-size: 11px; line-height: 11px; font-weight: 600; }
  .wm { display: flex; gap: 1px; }
  .wm button { width: 14px; }
  .wm svg { width: 8px; height: 8px; }

  .menu { height: 18px; flex: none; display: flex; gap: 10px; padding-left: 8px; border-bottom: 1px solid #e0e0e0; box-sizing: border-box; }
  .menu u { text-underline-offset: 2px; }

  .bar { height: 31px; flex: none; display: flex; align-items: center; padding-left: 3px; background: linear-gradient(#f8f8f8, #efefef); border-bottom: 1px solid #c9c9c9; }
  .bar.second { height: 30px; }
  .grip { width: 3px; height: 16px; margin-right: 4px; flex: none; background: radial-gradient(circle, #ccc 0 1px, transparent 1px) 0 0 / 3px 3px; }
  .tool { width: 27px; height: 28px; }
  .tool.wide { width: 28px; }
  .drop { width: 11px; height: 20px; }
  .sep { width: 1px; height: 26px; margin: 0 2px 0 3px; background: #d5d5d5; }
  .gap { width: 3px; height: 16px; margin: 0 5px; background: radial-gradient(circle, #d2d2d2 0 1px, transparent 1px) 0 0 / 3px 3px; }
  .gap.big { margin: 0 17px 0 6px; }
  .bench { display: flex; align-items: center; box-sizing: border-box; width: 139px; height: 21px; margin: 0 12px; padding: 0 5px 0 3px; border: 1px solid #b8b8b8; border-radius: 2px; background: linear-gradient(#fdfdfd, #f1f1f1); }
  .bench select { flex: 1; min-width: 0; appearance: none; border: 0; background: none; font: inherit; color: inherit; padding: 0 2px; }

  main { flex: 1; min-height: 0; display: grid; grid-template-columns: 464px 1fr; }
  aside { display: flex; flex-direction: column; min-height: 0; padding-right: 5px; }
  .tabs { display: flex; height: 23px; flex: none; padding-left: 1px; padding-top: 1px; border-bottom: 1px solid #d2d2d2; }
  .tabs button { padding: 0 9px; background: #dedede; border: 1px solid #c8c8c8; border-left-width: 0; border-bottom: 0; }
  .tabs button.on { background: #f6f6f6; border-left-width: 1px; }
  .tabs.low { border: 0; padding: 0; height: 25px; }
  .tabs.low button { background: #e6e6e6; border: 0; padding: 0 10px; }
  .tabs.low button.on { background: #fff; border: 1px solid #cfcfcf; border-top: 0; padding: 0 9px; }
  .dock { display: flex; align-items: center; height: 18px; flex: none; gap: 7px; padding: 0 2px 0 10px; }
  .dock h2 { flex: 1; margin: 0; text-align: center; font: inherit; }
  .dock svg { width: 14px; height: 14px; }
  .frame { display: flex; background: #fff; border: 1px solid #bdbdbd; box-sizing: border-box; overflow: hidden; }
  .treeframe { height: 233px; flex: none; border-top-color: #dcdcdc; }
  .propframe { flex: 1; min-height: 0; margin-top: 4px; }
  .tree { flex: 1; margin: 0; padding: 0; list-style: none; display: grid; grid-auto-rows: 21px 21px 22px; justify-items: start; align-content: start; }
  li { display: flex; align-items: center; box-sizing: border-box; color: #2b2b2f; }
  li .tw { width: 18px; display: flex; justify-content: center; margin-right: 6px; }
  .eye { width: 18px; height: 14px; margin-right: 3px; color: #111; }
  li .name { padding: 0 5px 0 10px; line-height: 21px; }
  li.root { font-weight: 700; color: #111; }
  li.root .tw { margin-right: 4px; }
  li.root .name { padding-left: 5px; }
  li.dim { color: #bcbcbc; }
  li.sel { background: #308cc6; color: #e9f4fb; }

  .scroll { width: 12px; flex: none; display: flex; flex-direction: column; border-left: 1px solid #c4c4c4; background: #f3f3f3; }
  .scroll button { height: 12px; background: #fbfbfb; }
  .track { flex: 1; display: flex; flex-direction: column; background: #e2e2e2; border: solid #c9c9c9; border-width: 1px 0; }
  .thumb { background: #fafafa; border-bottom: 1px solid #c9c9c9; }
  .a .thumb { height: 31%; }
  .b .thumb { height: 98%; }

  .props { flex: 1; min-height: 0; overflow: hidden; }
  table { width: 100%; border-collapse: collapse; table-layout: fixed; }
  .keycol { width: 136px; }
  tr { height: 19px; }
  tr:nth-child(3n) { height: 18px; }
  td, th { padding: 0; line-height: 17px; text-align: left; }
  .group th { background: #9e9e9e; color: #fff; font-weight: 700; padding-left: 3px; }
  tr:nth-child(even) td { background: #f6f6f6; }
  .k { border-right: 1px solid #bdbdbd; }
  .k span { display: block; margin-left: 18px; padding-left: 3px; border-bottom: 1px solid #d2d2d2; }
  .v { padding-left: 1px; border-bottom: 1px solid #d2d2d2; }

  section { display: flex; flex-direction: column; min-width: 0; }
  .view { flex: 1; min-height: 0; position: relative; background: #9b9fba; overflow: hidden; border-top: 1px solid #8287a8; box-sizing: border-box; }
  .scene { position: absolute; inset: -1px 0 0 0; width: 100%; height: calc(100% + 1px); }
  .navcube { position: absolute; right: 0; top: -3px; width: 160px; height: 150px; }
  .axes { position: absolute; right: 0; bottom: 39px; width: 120px; height: 120px; }
  .doctab { align-self: flex-start; height: 28px; box-sizing: border-box; display: flex; align-items: center; gap: 2px; width: 134px; padding-left: 11px; background: #f9f9f9; border: 1px solid #bdbdbd; border-radius: 0 0 2px 2px; }
  .doctab button { margin-left: 2px; }
  .doctab svg:not(.i14) { width: 9px; height: 9px; }

  .status { height: 31px; flex: none; display: flex; align-items: center; padding: 0 3px 0 1px; background: linear-gradient(#efefef 24px, #c9c7c3); }
  .msg { flex: 1; color: #26262c; }
  .status button + button { margin-left: 6px; }
  .status button.lock { width: 27px; height: 18px; border: 1px solid #bbb; background: #dedede; box-sizing: border-box; border-radius: 2px; gap: 2px; }
  .status button.ratio { margin-left: 30px; gap: 14px; }
  .status button.paper { margin-left: 15px; gap: 9px; }
  .status button.nav { margin-left: 14px; gap: 4px; }
  .status .nav svg:first-child { margin-right: -3px; }
  .status button.size { margin-left: 8px; gap: 2px; }

  .task { height: 32px; flex: none; display: flex; align-items: center; background: #e8d1ab; font: 12px/16px Roboto, sans-serif; color: #3f3a34; padding-left: 2px; }
  .launch { display: flex; gap: 4px; margin-right: 2px; }
  .grip.small { margin: 0 4px 0 0; }
  .win { gap: 6px; height: 32px; width: 103px; justify-content: flex-start; padding-left: 1px; box-sizing: border-box; white-space: nowrap; }
  .win.on { background: #d9cfc8; }
  .eyes { margin-left: 3px; }
  .meteo { display: flex; align-items: center; gap: 3px; margin-left: 3px; }
  .tray { display: grid; grid-template-columns: 14px 14px; gap: 2px; margin-left: 10px; }
  .clip { margin-left: 12px; }
  .graph { width: 46px; height: 28px; background: #fff; border-bottom: 1px dotted #456; margin-left: 4px; }
  .graph.slim { width: 32px; margin-left: 3px; }
  .cpu { display: flex; align-items: flex-end; width: 13px; height: 28px; box-sizing: border-box; margin-left: 8px; padding-left: 3px; border: solid #d8cbb5; border-width: 0 1px; }
  .cpu i { width: 3px; height: 9px; background: #22b455; }
  .temp { font: 17px/20px "Noto Sans", sans-serif; color: #32a01c; width: 43px; white-space: nowrap; margin-left: 1px; }
  .freq { font: 700 14px/20px "Noto Sans", sans-serif; color: #2b5c9c; width: 62px; white-space: nowrap; }
  .clock { flex: 1; height: 32px; display: flex; flex-direction: column; align-items: center; overflow: hidden; font: 12px/12px "Noto Sans", sans-serif; color: #84205f; white-space: nowrap; }
  .clock b { font-size: 15px; line-height: 20px; flex: none; color: #75095a; }
  .keys { margin-right: 4px; }
  .keys b { background: #17e817; color: #125; font-weight: 400; }
  .exit { margin-right: 3px; }
</style>
